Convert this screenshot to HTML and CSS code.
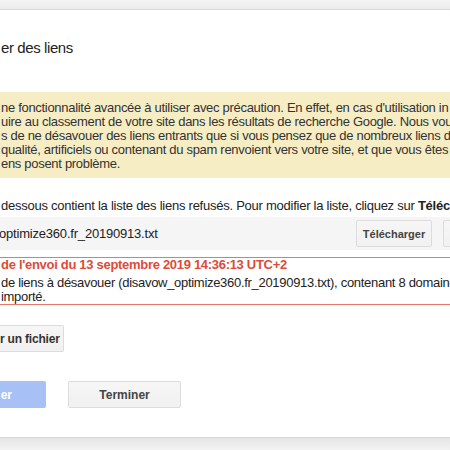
FILE: index.html
```html
<!DOCTYPE html>
<html lang="fr">
<head>
<meta charset="utf-8">
<title>Désavouer des liens</title>
<link rel="stylesheet" href="styles.css">
</head>
<body>
<div class="top-strip"></div>
<div class="dialog">
  <h1 class="title">er des liens</h1>
  <div class="warning">
    <div class="line">ne fonctionnalité avancée à utiliser avec précaution. En effet, en cas d'utilisation in</div>
    <div class="line">uire au classement de votre site dans les résultats de recherche Google. Nous vou</div>
    <div class="line">s de ne désavouer des liens entrants que si vous pensez que de nombreux liens d</div>
    <div class="line">qualité, artificiels ou contenant du spam renvoient vers votre site, et que vous êtes</div>
    <div class="line">ens posent problème.</div>
  </div>
  <p class="intro line">dessous contient la liste des liens refusés. Pour modifier la liste, cliquez sur <b>Téléc</b></p>
  <div class="file-row">
    <span class="file-name">optimize360.fr_20190913.txt</span>
    <button class="btn btn-small">Télécharger</button>
    <button class="btn btn-small btn-blank"></button>
  </div>
  <div class="error-box">
    <div class="line error-title">de l'envoi du 13 septembre 2019 14:36:13 UTC+2</div>
    <div class="line">de liens à désavouer (disavow_optimize360.fr_20190913.txt), contenant 8 domaine</div>
    <div class="line">importé.</div>
  </div>
  <button class="btn btn-upload">r un fichier</button>
  <div class="footer">
    <button class="btn btn-primary">er</button>
    <button class="btn btn-done">Terminer</button>
  </div>
</div>
<div class="bottom-strip"></div>
</body>
</html>
```

FILE: styles.css
```css
html, body {
  margin: 0;
  padding: 0;
  width: 450px;
  height: 450px;
  overflow: hidden;
  background: #f1f1f1;
  font-family: "Liberation Sans", Arial, sans-serif;
  color: #333;
}

.top-strip {
  height: 9px;
  background: linear-gradient(#f4f4f4, #ececec);
  border-bottom: 1px solid #dadada;
}

.dialog {
  height: 427px;
  background: #fff;
  overflow: hidden;
  display: flex;
  flex-direction: column;
  align-items: flex-start;
}

.title {
  margin: 28px 0 0 1px;
  font-size: 15px;
  letter-spacing: -0.4px;
  line-height: 20px;
  font-weight: normal;
  color: #222;
}

.line {
  white-space: nowrap;
  overflow: hidden;
  width: 450px;
  letter-spacing: -0.3px;
}

.warning {
  margin-top: 34px;
  width: 450px;
  box-sizing: border-box;
  padding: 9px 0 7px 1px;
  background: #f6edc5;
  font-size: 13px;
  line-height: 14px;
  color: #333;
}

.intro {
  margin: 21px 0 0 1px;
  font-size: 13px;
  line-height: 14px;
  color: #222;
  letter-spacing: -0.25px;
}
.intro b { color: #222; }

.file-row {
  margin-top: 4px;
  width: 530px;
  height: 33px;
  background: #f5f5f5;
  display: flex;
  align-items: center;
  gap: 11px;
  padding-right: 11px;
  box-sizing: border-box;
}

.file-name {
  flex: 1;
  font-size: 13px;
  letter-spacing: -0.2px;
  color: #222;
  margin-left: -1px;
}

.btn {
  font-family: "Liberation Sans", Arial, sans-serif;
  font-weight: bold;
  font-size: 11px;
  color: #444;
  background: linear-gradient(#f6f6f6, #f1f1f1);
  border: 1px solid #dcdcdc;
  border-radius: 2px;
  height: 27px;
  padding: 0;
  margin: 0;
  white-space: nowrap;
}

.btn-small {
  width: 76px;
  flex: none;
}

.error-box {
  margin-top: 7px;
  width: 460px;
  box-sizing: border-box;
  border: 1px solid #e5786b;
  border-left: none;
  padding: 0 0 0 1px;
  font-size: 13px;
  line-height: 14px;
  color: #222;
}
.error-box .error-title {
  color: #dd4b39;
  font-weight: bold;
  margin-bottom: 4px;
}

.btn-upload {
  margin-top: 20px;
  width: 64px;
  border-left: none;
  border-radius: 0 2px 2px 0;
  font-size: 12px;
  text-align: right;
  padding-right: 8px;
  color: #333;
  letter-spacing: -0.2px;
}

.footer {
  margin-top: 29px;
  display: flex;
  gap: 22px;
}

.btn-primary {
  width: 46px;
  background: #a7c1f6;
  border: 1px solid #a7c1f6;
  border-left: none;
  border-radius: 0 2px 2px 0;
  color: #fff;
  font-size: 12px;
  text-align: right;
  padding-right: 33px;
}

.btn-done {
  width: 113px;
  font-size: 12px;
  color: #444;
}

.bottom-strip {
  height: 13px;
  border-top: 1px solid #d8d8d8;
  background: linear-gradient(#e6e6e6, #f3f3f3);
}
```
